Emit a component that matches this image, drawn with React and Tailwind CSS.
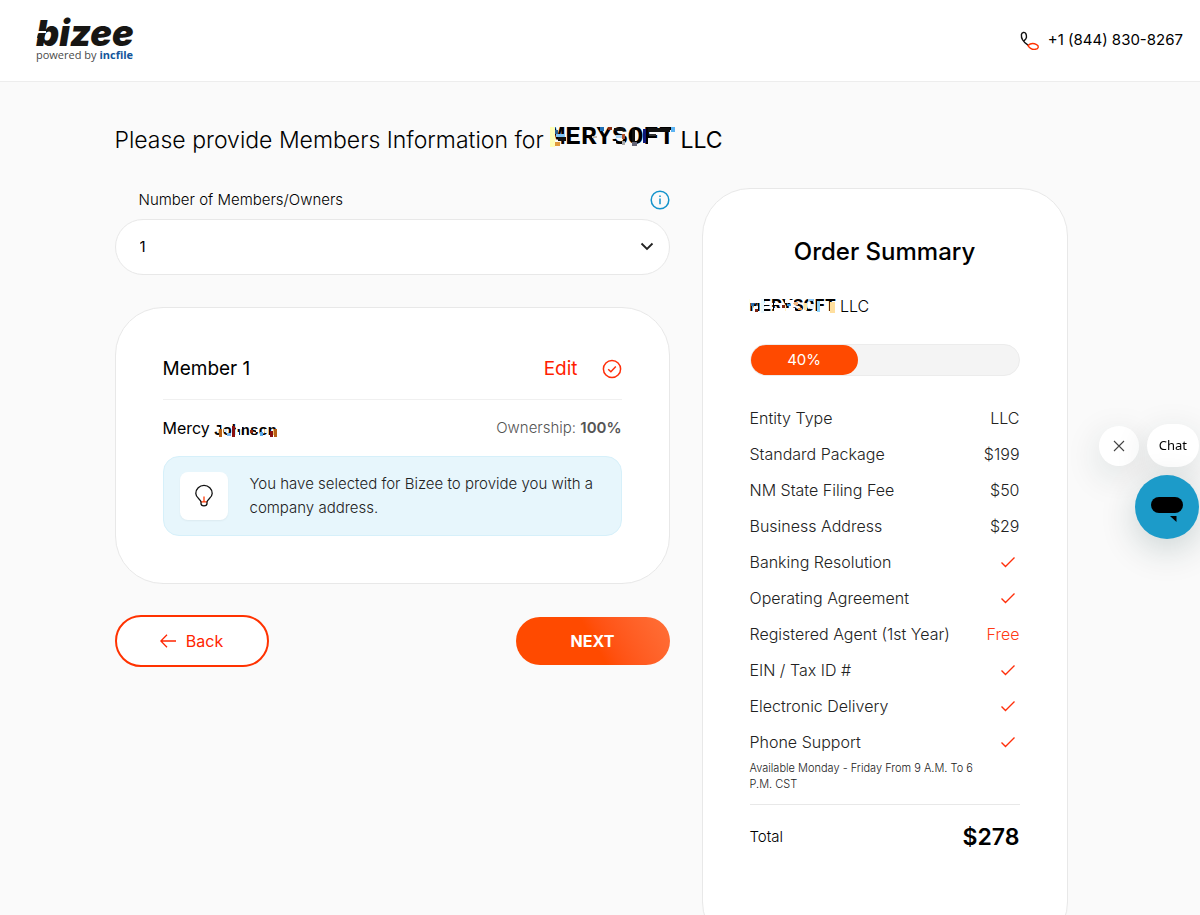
import React, { useState } from 'react';

const orderItems = [
  { label: 'Entity Type', value: 'LLC' },
  { label: 'Standard Package', value: '$199' },
  { label: 'NM State Filing Fee', value: '$50' },
  { label: 'Business Address', value: '$29' },
  { label: 'Banking Resolution', included: true },
  { label: 'Operating Agreement', included: true },
  { label: 'Registered Agent (1st Year)', value: 'Free', free: true },
  { label: 'EIN / Tax ID #', included: true },
  { label: 'Electronic Delivery', included: true },
  { label: 'Phone Support', included: true },
];

// [x, y, width, height, colour] of the blocks that hide each name
const headingBlocks = [
  [0, 2, 5, 20, '#ffffb8'], [5, 5, 3, 4, '#2b5f8f'], [6, 9, 8, 3, '#7cc4f5'], [8, 12, 8, 4, '#111'],
  [5, 17, 5, 4, '#e09a3c'], [42, 11, 5, 2, '#c5bfb6'], [50, 2, 4, 4, '#1f6fb5'], [58, 2, 4, 3, '#8b2a10'],
  [64, 3, 10, 3, '#111'], [66, 10, 6, 3, '#a9d4f5'], [62, 16, 4, 3, '#fafafa'], [72, 9, 3, 5, '#b0522a'],
  [72, 16, 3, 4, '#a8a8a8'], [82, 4, 3, 15, '#111'], [93, 4, 3, 14, '#10187a'], [82, 17, 5, 4, '#667'],
  [98, 3, 22, 4, '#111'], [99, 9, 7, 2, '#333'], [98, 13, 11, 9, '#fafafa'], [121, 2, 6, 5, '#5cb3f2'],
];

const summaryBlocks = [
  [0, 1, 11, 4, '#fff'], [1, 5, 3, 3, '#2d6fb0'], [4, 8, 4, 3, '#fff'], [5, 11, 3, 3, '#7c2412'],
  [11, 1, 3, 14, '#e8f8ff'], [14, 5, 9, 2, '#fff'], [14, 9, 9, 2, '#fff'], [24, 5, 10, 2, '#fff'],
  [24, 10, 10, 5, '#fff'], [32, 7, 3, 3, '#7c2412'], [35, 2, 9, 3, '#fff'], [37, 6, 4, 2, '#3a9ae2'],
  [36, 10, 9, 5, '#fff'], [44, 4, 4, 3, '#f4b883'], [48, 10, 4, 2, '#f0a050'], [54, 5, 3, 7, '#ffe2a0'],
  [58, 1, 6, 2, '#8ac8f5'], [60, 6, 4, 5, '#e8f4fd'], [67, 3, 3, 11, '#8bd2fa'], [70, 10, 7, 5, '#fff'],
  [80, 4, 5, 11, '#ffdf9e'],
];

const memberBlocks = [
  [2, 3, 4, 2, '#fff'], [5, 5, 3, 8, '#b85f14'], [10, 5, 3, 3, '#cde9fb'], [13, 9, 4, 3, '#79b6ee'],
  [18, 2, 3, 11, '#8c1010'], [22, 1, 6, 4, '#fff'], [22, 8, 3, 5, '#fff'], [36, 6, 3, 3, '#9a2c10'],
  [42, 5, 3, 3, '#fff'], [46, 8, 3, 4, '#57a9ec'], [51, 5, 3, 4, '#e9f4fb'], [56, 7, 3, 6, '#8c1010'],
  [60, 5, 3, 8, '#b85f14'],
];

function MaskedName({ text, blocks, className }) {
  return (
    <span className={`relative inline-block font-bold ${className}`}>
      {text}
      <svg className="absolute inset-0 w-full h-full" shapeRendering="crispEdges" aria-hidden="true">
        {blocks.map(([x, y, w, h, fill], i) => (
          <rect key={i} x={x} y={y} width={w} height={h} fill={fill} />
        ))}
      </svg>
    </span>
  );
}

function CheckIcon() {
  return (
    <svg className="w-4 h-4 mr-1" viewBox="0 0 16 16" fill="none" stroke="#ff2e0a" strokeWidth="1.4" role="img" aria-label="Included">
      <path d="M1.5 8.5 L5.5 12.5 L14.5 3.5" />
    </svg>
  );
}

function Logo() {
  return (
    <a href="#" className="block w-[98px] mb-1">
      <span className="relative block text-[36px] leading-8 font-black italic text-[#171614]">
        bizee
        <svg className="absolute inset-0 w-full h-full" viewBox="0 0 98 32" fill="none" aria-hidden="true">
          <path d="M0 15 H10" stroke="#fff" strokeWidth="2" />
          <path d="M2 17 H9 L8 21 H1 Z" fill="#171614" />
        </svg>
      </span>
      <span className="block text-[11px] leading-3 text-[#4a4a4a] whitespace-nowrap font-['Open_Sans',sans-serif]">
        powered by <b className="text-[#14569b]">incfile</b>
      </span>
    </a>
  );
}

function MemberCard() {
  return (
    <section className="mt-8 bg-white border border-[#e8e8e8] rounded-[48px] p-[47px]">
      <div className="flex items-center justify-between pb-4 border-b border-[#f0f0f0]">
        <h2 className="text-[19px] leading-7">Member 1</h2>
        <div className="flex items-center gap-6">
          <button type="button" className="text-[19px] leading-7 text-[#ff1e00] cursor-pointer">Edit</button>
          <svg className="w-5 h-5" viewBox="0 0 20 20" fill="none" stroke="#ff2e0a" strokeWidth="1.5" aria-hidden="true">
            <circle cx="10" cy="10" r="8.6" />
            <path d="M6.2 10.2 L8.9 12.8 L13.8 7.6" />
          </svg>
        </div>
      </div>

      <div className="mt-4 flex items-center justify-between leading-6">
        <p className="flex items-end gap-1">
          Mercy
          <MaskedName text="Johnson" blocks={memberBlocks} className="leading-4 text-[15px] font-['Liberation_Mono',monospace]" />
        </p>
        <p className="font-light text-[15px] text-[#555]">
          Ownership: <span className="font-semibold">100%</span>
        </p>
      </div>

      <div className="mt-4 flex items-center gap-[22px] h-20 px-4 rounded-2xl border border-[#d6f0fa] bg-[#e7f6fc]">
        <div className="w-12 h-12 shrink-0 flex items-center justify-center bg-white rounded-lg shadow-xs">
          <svg className="w-6 h-6" viewBox="0 0 24 24" fill="none" strokeWidth="1.3" aria-hidden="true">
            <path d="M12 12.5 V18 M9 17.8 H15" stroke="#ff3c0a" />
            <path d="M9 18 C9 15.5 3.8 14 3.8 9.4 A8.2 8 0 0 1 20.2 9.4 C20.2 14 15 15.5 15 18 V19.5 Q15 21.8 12 21.8 Q9 21.8 9 19.5 Z" stroke="#111" />
          </svg>
        </div>
        <p className="font-light leading-6 text-[15px] text-[#222]">
          You have selected for Bizee to provide you with a company address.
        </p>
      </div>
    </section>
  );
}

function OrderSummary() {
  const progress = 40;

  return (
    <aside className="w-[366px] shrink-0 mt-2 bg-white border border-[#e8e8e8] rounded-[48px] px-[47px] pt-[47px] pb-24">
      <h2 className="text-center text-2xl leading-8 font-medium">Order Summary</h2>

      <p className="mt-6 flex items-center gap-1 leading-7 font-light">
        <MaskedName text="MERYSOFT" blocks={summaryBlocks} className="leading-4 text-lg font-['Liberation_Mono',monospace]" />
        LLC
      </p>

      <div className="mt-6 h-8 rounded-full border border-[#ececec] bg-[#f4f4f4]">
        <div
          className="h-full rounded-full bg-[#ff4a00] text-white flex items-center justify-center text-[15px]"
          style={{ width: `${progress}%` }}
        >
          {progress}%
        </div>
      </div>

      <table className="mt-6 w-full font-light text-[#222]">
        <tbody>
          {orderItems.map((item) => (
            <tr key={item.label} className="h-9">
              <th scope="row" className="text-left font-light">{item.label}</th>
              <td>
                <div className={item.free ? 'flex justify-end text-[#ff3a14]' : 'flex justify-end'}>
                  {item.included ? <CheckIcon /> : item.value}
                </div>
              </td>
            </tr>
          ))}
        </tbody>
      </table>
      <p className="w-60 text-[11px] leading-4 font-light text-[#222]">
        Available Monday - Friday From 9 A.M. To 6 P.M. CST
      </p>

      <div className="mt-3 pt-4 border-t border-[#e8e8e8] flex items-center justify-between">
        <span className="font-light text-[15px]">Total</span>
        <span className="text-[23px] leading-8 font-semibold">$278</span>
      </div>
    </aside>
  );
}

function ChatWidget() {
  const [open, setOpen] = useState(true);

  return (
    <div className="fixed right-px top-[424px] flex flex-col items-end gap-2">
      {open && (
        <div className="flex items-center gap-2">
          <button
            type="button"
            aria-label="Close chat"
            onClick={() => setOpen(false)}
            className="w-10 h-10 rounded-full bg-white flex items-center justify-center shadow-[0_10px_36px_rgba(0,50,50,0.14)]"
          >
            <svg className="w-3 h-3" viewBox="0 0 12 12" stroke="#444" strokeWidth="1.1" aria-hidden="true">
              <path d="M1 1 L11 11 M11 1 L1 11" />
            </svg>
          </button>
          <button type="button" className="h-[43px] px-3 rounded-full bg-white text-[13px] shadow-[0_10px_36px_rgba(0,50,50,0.14)] font-['Noto_Sans',sans-serif]">
            Chat
          </button>
        </div>
      )}
      <button
        type="button"
        aria-label="Open chat"
        className="w-16 h-16 rounded-full bg-[#1c9bc9] flex items-center justify-center shadow-[0_10px_36px_rgba(0,50,50,0.2)]"
      >
        <svg className="w-8 h-8" viewBox="0 0 32 32" aria-hidden="true">
          <rect x="0" y="6" width="32" height="16" rx="8" />
          <path d="M19 25 H25.5 V31 Z" />
        </svg>
      </button>
    </div>
  );
}

function App() {
  const [members, setMembers] = useState('1');

  return (
    <div className="min-h-screen bg-[#fafafa] text-black font-['Inter',sans-serif]">
      <header className="h-[82px] pl-9 pr-[17px] flex items-center justify-between bg-white border-b border-[#ededed]">
        <Logo />
        <a href="tel:+18448308267" className="flex items-center gap-2 text-[15px]">
          <svg className="w-5 h-5" viewBox="0 0 20 20" fill="none" strokeWidth="1.4" strokeLinecap="round" aria-hidden="true">
            <path d="M8 14.2 C4 11.5 1 7.2 1.4 3.6 C1.7 1.2 4.8 .6 5.8 2.6 C7 5 6.6 7.6 4.4 9.4" stroke="#111" />
            <path d="M8 14.6 C10 12.6 13.4 12 16.6 13.6 C19.4 15.1 18.6 17.8 15.4 18.3 C12.6 18.7 9.6 17.3 8 14.6 Z" stroke="#ff3200" />
          </svg>
          +1 (844) 830-8267
        </a>
      </header>

      <main className="pl-4 pr-[34px] pt-[42px]">
        <div className="max-w-[953px] mx-auto">
          <h1 className="flex items-center gap-1.5 text-[23px] leading-8 font-light whitespace-nowrap">
            Please provide Members Information for
            <MaskedName text="MERYSOFT" blocks={headingBlocks} className="leading-6 pb-1.5 text-[26px] font-['Liberation_Mono',monospace]" />
            <span className="font-normal">LLC</span>
          </h1>

          <div className="mt-6 flex items-start gap-8">
            <div className="flex-1 min-w-0">
              <div className="flex items-center justify-between pl-6 pt-2">
                <label htmlFor="members" className="font-light text-[15px] leading-6">Number of Members/Owners</label>
                <button type="button" aria-label="More information">
                  <svg className="w-5 h-5" viewBox="0 0 20 20" fill="none" stroke="#1493cb" strokeWidth="1.5" aria-hidden="true">
                    <circle cx="10" cy="10" r="8.8" />
                    <path d="M10 8.5 V14.2 M10 5.4 V7" />
                  </svg>
                </button>
              </div>

              <div className="relative mt-[7px]">
                <select
                  id="members"
                  value={members}
                  onChange={(e) => setMembers(e.target.value)}
                  className="appearance-none w-full h-14 px-6 rounded-full bg-white border border-[#e8e8e8] text-[15px]"
                >
                  <option value="1">1</option>
                  <option value="2">2</option>
                  <option value="3">3</option>
                </select>
                <svg className="absolute right-4 top-5 w-3.5 h-3.5 pointer-events-none" viewBox="0 0 14 14" fill="none" stroke="#222" strokeWidth="1.8" aria-hidden="true">
                  <path d="M1.5 4.5 L7 10 L12.5 4.5" />
                </svg>
              </div>

              <MemberCard />

              <div className="mt-[31px] flex items-center justify-between">
                <button type="button" className="w-[154px] h-[52px] flex items-center justify-center gap-2.5 rounded-full border-2 border-[#ff3200] bg-white text-[#ff2400]">
                  <svg className="w-4 h-4" viewBox="0 0 16 16" fill="none" stroke="currentColor" strokeWidth="1.3" aria-hidden="true">
                    <path d="M16 8 H.8 M7 1.8 L.8 8 L7 14.2" />
                  </svg>
                  Back
                </button>
                <button type="button" className="w-[154px] h-12 rounded-full bg-linear-60 from-[#ff4a00] from-50% to-[#ff7038] text-white font-bold">
                  NEXT
                </button>
              </div>
            </div>

            <OrderSummary />
          </div>
        </div>
      </main>

      <ChatWidget />
    </div>
  );
}

export default App;
